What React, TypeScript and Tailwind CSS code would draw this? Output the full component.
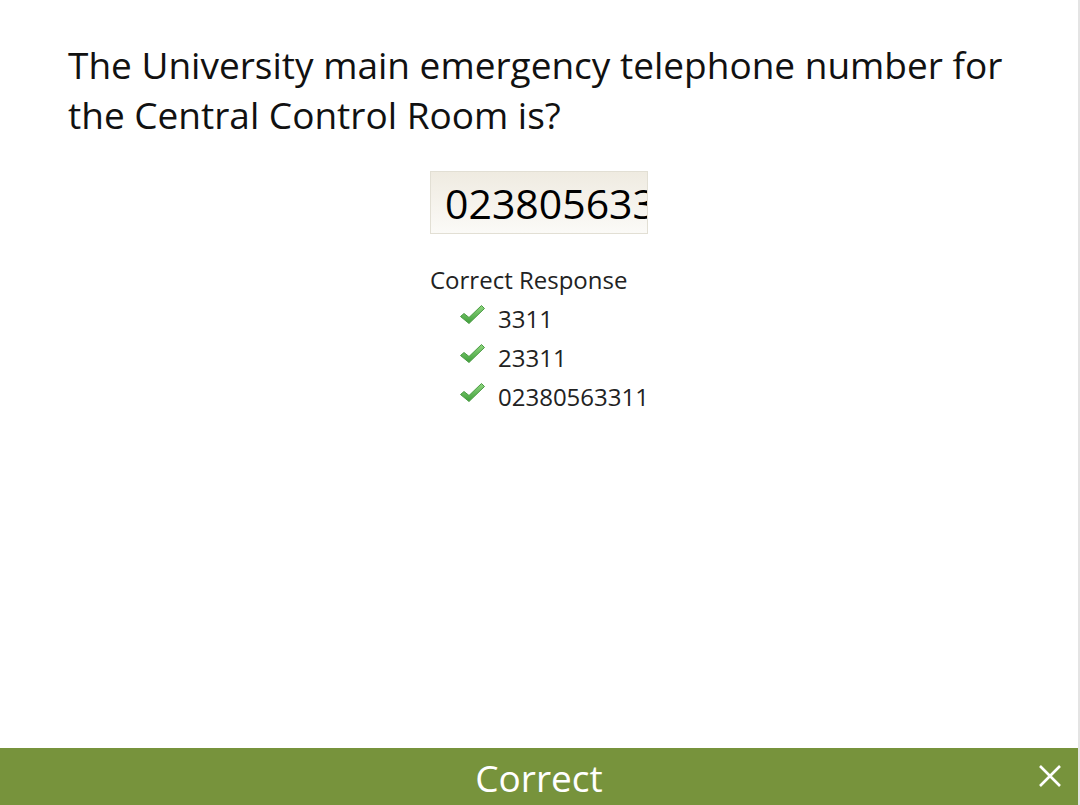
import React from 'react';

const answers = ['3311', '23311', '02380563311'];

const Check = () => (
  <svg width="27" height="22" viewBox="0 0 27 22" className="shrink-0">
    <defs>
      <linearGradient id="chk" x1="0" y1="0" x2="0" y2="1">
        <stop offset="0" stopColor="#8fd67f" />
        <stop offset="1" stopColor="#3f9f3a" />
      </linearGradient>
    </defs>
    <path
      d="M1.5 12.5 L5 9.5 L10 13.5 L22.5 1.5 L25.5 4.5 L10 19.5 Z"
      fill="url(#chk)"
      stroke="#4a9a43"
      strokeWidth="1"
      strokeLinejoin="round"
    />
  </svg>
);

export default function App() {
  return (
    <div className="w-[1080px] h-[805px] bg-white flex flex-col border-r-2 border-[#e4e4e4] font-['Open_Sans',sans-serif] text-black overflow-hidden">
      <div className="flex-1 flex flex-col">
        {/* Question */}
        <h1 className="px-[68px] pt-[40px] text-[37px] leading-[50px] font-normal text-[#111]">
          The University main emergency telephone number for the Central Control Room is?
        </h1>

        {/* Answer block */}
        <div className="mt-[31px] self-center w-[218px]">
          <input
            readOnly
            value="02380563311"
            className="w-[218px] h-[63px] border border-[#e2dfd4] bg-gradient-to-b from-[#efebe1] to-[#fbfaf7] pl-[14px] pr-0 text-[41px] text-black outline-none font-['Open_Sans',sans-serif]"
          />

          <p className="mt-[30px] text-[24px] leading-[32px] text-[#222]">Correct Response</p>
          <ul className="mt-[7px] pl-[29px] flex flex-col gap-[7px]">
            {answers.map((a) => (
              <li key={a} className="flex items-center gap-[12px] h-[32px]">
                <span className="-mt-[8px]"><Check /></span>
                <span className="text-[24px] leading-[32px] text-[#222]">{a}</span>
              </li>
            ))}
          </ul>
        </div>
      </div>

      {/* Feedback bar */}
      <div className="relative h-[57px] bg-[#77933c] flex items-center justify-center">
        <span className="text-white text-[37px] leading-none mt-[1px]">Correct</span>
        <button className="absolute right-[16px] top-[16px] text-white">
          <svg width="24" height="24" viewBox="0 0 24 24">
            <path d="M2 2 L22 22 M22 2 L2 22" stroke="white" strokeWidth="2.6" />
          </svg>
        </button>
      </div>
    </div>
  );
}
